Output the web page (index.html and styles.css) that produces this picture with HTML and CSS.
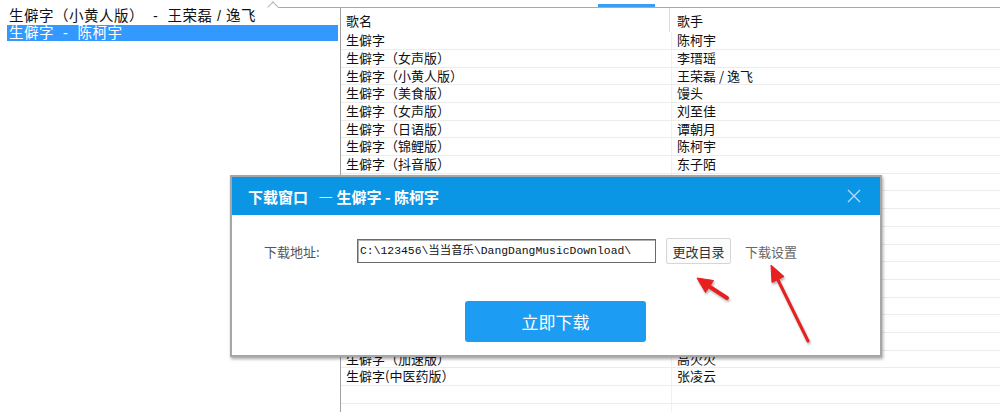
FILE: index.html
```html
<!DOCTYPE html>
<html lang="zh-CN">
<head>
    <meta charset="UTF-8">
    <meta name="viewport" content="width=device-width, initial-scale=1.0">
    <title>当当音乐 - 下载</title>
    <link rel="stylesheet" href="styles.css">
</head>
<body>
    <div class="topline">
        <span class="notch"></span>
        <span class="tab-mark"></span>
    </div>

    <div class="main">
        <!-- Search history -->
        <ul class="history">
            <li>生僻字（小黄人版）  -  王荣磊 / 逸飞</li>
            <li class="selected">生僻字  -  陈柯宇</li>
        </ul>

        <!-- Results table -->
        <div class="results">
            <div class="row head">
                <div class="cell name">歌名</div>
                <div class="cell singer">歌手</div>
            </div>
            <div class="row"><div class="cell name">生僻字</div><div class="cell singer">陈柯宇</div></div>
            <div class="row"><div class="cell name">生僻字（女声版）</div><div class="cell singer">李瑨瑶</div></div>
            <div class="row"><div class="cell name">生僻字（小黄人版）</div><div class="cell singer">王荣磊 / 逸飞</div></div>
            <div class="row"><div class="cell name">生僻字（美食版）</div><div class="cell singer">馒头</div></div>
            <div class="row"><div class="cell name">生僻字（女声版）</div><div class="cell singer">刘至佳</div></div>
            <div class="row"><div class="cell name">生僻字（日语版）</div><div class="cell singer">谭朝月</div></div>
            <div class="row"><div class="cell name">生僻字（锦鲤版）</div><div class="cell singer">陈柯宇</div></div>
            <div class="row"><div class="cell name">生僻字（抖音版）</div><div class="cell singer">东子陌</div></div>
            <div class="row"><div class="cell name"></div><div class="cell singer"></div></div>
            <div class="row"><div class="cell name"></div><div class="cell singer"></div></div>
            <div class="row"><div class="cell name"></div><div class="cell singer"></div></div>
            <div class="row"><div class="cell name"></div><div class="cell singer"></div></div>
            <div class="row"><div class="cell name"></div><div class="cell singer"></div></div>
            <div class="row"><div class="cell name"></div><div class="cell singer"></div></div>
            <div class="row"><div class="cell name"></div><div class="cell singer"></div></div>
            <div class="row"><div class="cell name"></div><div class="cell singer"></div></div>
            <div class="row"><div class="cell name"></div><div class="cell singer"></div></div>
            <div class="row"><div class="cell name"></div><div class="cell singer"></div></div>
            <div class="row"><div class="cell name">生僻字（加速版）</div><div class="cell singer">高火火</div></div>
            <div class="row"><div class="cell name">生僻字(中医药版）</div><div class="cell singer">张凌云</div></div>
            <div class="row"><div class="cell name"></div><div class="cell singer"></div></div>
            <div class="row"><div class="cell name"></div><div class="cell singer"></div></div>
        </div>
    </div>

    <!-- Download dialog -->
    <div class="dialog">
        <div class="dialog-title">
            <span>下载窗口&nbsp;&nbsp;&nbsp;— 生僻字 - 陈柯宇</span>
            <svg class="close" width="14" height="14" viewBox="0 0 14 14">
                <path d="M1 1 L13 13 M13 1 L1 13" stroke="#b8dcf6" stroke-width="1.3" fill="none"/>
            </svg>
        </div>
        <div class="dialog-body">
            <div class="path-row">
                <label class="path-label">下载地址:</label>
                <div class="path-input">C:\123456\当当音乐\DangDangMusicDownload\</div>
                <button class="btn-change">更改目录</button>
                <span class="link-settings">下载设置</span>
            </div>
            <div class="actions">
                <button class="btn-download">立即下载</button>
            </div>
        </div>
    </div>

    <!-- Annotation arrows -->
    <svg class="arrows" width="1000" height="412" viewBox="0 0 1000 412">
        <g fill="#e81f1f" stroke="#e81f1f">
            <path d="M727 298 L710 287" stroke-width="4" stroke-linecap="round"/>
            <polygon points="697,278 713.5,280.5 705.5,292.5" stroke-width="1"/>
            <path d="M808 341 L778 280" stroke-width="3" stroke-linecap="round"/>
            <polygon points="771,265 784,276.5 772,282.5" stroke-width="1"/>
        </g>
    </svg>
</body>
</html>
```

FILE: styles.css
```css
body {
    margin: 0;
    width: 1000px;
    height: 412px;
    overflow: hidden;
    background: #ffffff;
    color: #111;
    font-family: "Noto Sans CJK SC", "Liberation Sans", sans-serif;
    position: relative;
}
.topline {
    height: 7px;
    margin-left: 277px;
    border-bottom: 1px solid #a9a9a9;
    position: relative;
}
.notch {
    position: absolute;
    left: -8px;
    top: 3px;
    width: 7px;
    height: 7px;
    background: #fff;
    border-top: 1px solid #b5b5b5;
    border-left: 1px solid #b5b5b5;
    transform: rotate(45deg);
}
.tab-mark {
    position: absolute;
    left: 321px;
    top: 4px;
    width: 57px;
    height: 3px;
    background: #3d9df0;
}
.main {
    display: flex;
    height: 404px;
}
.history {
    width: 340px;
    margin: 0;
    padding: 0;
    list-style: none;
    font-family: "Liberation Sans", "Noto Sans CJK SC", sans-serif;
}
.history li {
    height: 17px;
    line-height: 17px;
    font-size: 14.5px;
    letter-spacing: 0.5px;
    padding-left: 9px;
    white-space: pre;
}
.history li.selected {
    background: #3399ff;
    color: #fff;
    margin: 0 2px 0 7px;
    padding-left: 2px;
    height: 16px;
    line-height: 16px;
}
.results {
    flex: 1;
    border-left: 1px solid #a0a0a0;
    font-size: 13px;
}
.row {
    display: flex;
    height: 17.7px;
    box-sizing: border-box;
    border-bottom: 1px solid #ececec;
}
.row.head {
    height: 24.3px;
    border-bottom: none;
    align-items: flex-start;
}
.cell {
    line-height: 16px;
    white-space: pre;
    box-sizing: border-box;
}
.cell.name {
    width: 331px;
    padding-left: 5px;
    border-right: 1px solid #f0f0f0;
}
.cell.singer {
    flex: 1;
    padding-left: 5px;
}
.head .cell {
    height: 24px;
    line-height: 26px;
}
.head .cell.name {
    width: 329px;
    border-right: 1px solid #dcdcdc;
}
.head .cell.singer {
    padding-left: 7px;
}
.dialog {
    position: absolute;
    left: 230px;
    top: 175px;
    width: 652px;
    height: 182px;
    box-sizing: border-box;
    border: 2px solid #a6a6a6;
    background: #ffffff;
    box-shadow: 1px 2px 3px rgba(0, 0, 0, 0.35);
}
.dialog-title {
    height: 38px;
    background: #0b96e5;
    color: #ffffff;
    display: flex;
    align-items: center;
    justify-content: space-between;
    padding: 0 19px 0 16px;
    font-size: 15px;
    font-weight: bold;
    white-space: pre;
}
.close {
    display: block;
}
.dialog-body {
    padding: 23px 0 0 32px;
}
.path-row {
    display: flex;
    align-items: center;
    height: 26px;
}
.path-label {
    width: 93px;
    font-size: 13px;
    color: #555;
}
.path-input {
    width: 299px;
    height: 24px;
    box-sizing: border-box;
    border: 1px solid #6a6a6a;
    box-shadow: inset 1px 1px 0 #b0b0b0;
    padding-left: 2px;
    font-family: "Liberation Mono", "Noto Sans CJK SC", monospace;
    font-size: 11.4px;
    line-height: 22px;
    white-space: pre;
    color: #111;
}
.btn-change {
    margin-left: 10px;
    width: 65px;
    height: 26px;
    border: 1px solid #d6d6d6;
    border-radius: 2px;
    background: #fcfcfc;
    font-family: inherit;
    font-size: 13px;
    color: #333;
    padding: 0;
}
.link-settings {
    margin-left: 14px;
    font-size: 13px;
    color: #666;
}
.actions {
    padding: 37px 0 0 201px;
}
.btn-download {
    width: 181px;
    height: 41px;
    border: none;
    border-radius: 3px;
    background: #1c9cf2;
    color: #ffffff;
    font-family: inherit;
    font-size: 17px;
    padding: 0;
}
.arrows {
    position: absolute;
    left: 0;
    top: 0;
    filter: drop-shadow(1px 2px 1px rgba(0, 0, 0, 0.3));
}
```
